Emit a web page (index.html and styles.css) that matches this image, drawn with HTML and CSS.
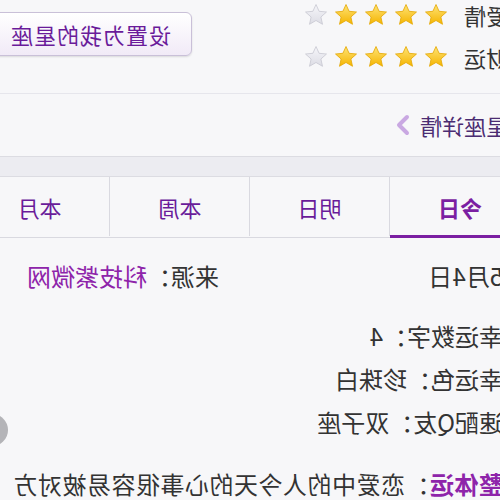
FILE: index.html
```html
<!DOCTYPE html>
<html>
  <head>
    <meta charset="utf-8">
    <title>星座运势</title>
    <link rel="stylesheet" href="styles.css">
  </head>
  <body>
    <svg class="defs" width="0" height="0">
      <defs>
        <linearGradient id="gold" x1="0" y1="0" x2="0" y2="1">
          <stop offset="0" stop-color="#ffe477"/>
          <stop offset="1" stop-color="#f4b400"/>
        </linearGradient>
        <linearGradient id="grey" x1="0" y1="0" x2="0" y2="1">
          <stop offset="0" stop-color="#f6f6fa"/>
          <stop offset="1" stop-color="#dcdce4"/>
        </linearGradient>
        <symbol id="star" viewBox="0 0 24 24">
          <polygon points="12,1.5 15.1,8.3 22.5,9 16.9,14 18.5,21.3 12,17.5 5.5,21.3 7.1,14 1.5,9 8.9,8.3"/>
        </symbol>
      </defs>
    </svg>
    <div class="page">
      <div class="top">
        <div class="rates">
          <div class="rate">
            <span class="rate-label">爱情</span>
            <span class="stars">
              <svg class="star on"><use href="#star"/></svg>
              <svg class="star on"><use href="#star"/></svg>
              <svg class="star on"><use href="#star"/></svg>
              <svg class="star on"><use href="#star"/></svg>
              <svg class="star off"><use href="#star"/></svg>
            </span>
          </div>
          <div class="rate">
            <span class="rate-label">财运</span>
            <span class="stars">
              <svg class="star on"><use href="#star"/></svg>
              <svg class="star on"><use href="#star"/></svg>
              <svg class="star on"><use href="#star"/></svg>
              <svg class="star on"><use href="#star"/></svg>
              <svg class="star off"><use href="#star"/></svg>
            </span>
          </div>
        </div>
        <button class="set-btn">设置为我的星座</button>
      </div>
      <div class="detail-link">
        星座详情
        <svg class="chev" width="16" height="22" viewBox="0 0 16 22"><path d="M4 3 L12 11 L4 19" fill="none" stroke="#c9a8e2" stroke-width="4" stroke-linecap="round" stroke-linejoin="round"/></svg>
      </div>
      <div class="band"></div>
      <div class="tabs">
        <div class="tab active">今日</div>
        <div class="tab">明日</div>
        <div class="tab">本周</div>
        <div class="tab">本月</div>
      </div>
      <div class="content">
        <div class="meta">
          <span>5月4日</span>
          <span class="source">来源：<a class="link">科技紫微网</a></span>
        </div>
        <div class="info">
          <p>幸运数字：4</p>
          <p>幸运色：珍珠白</p>
          <p>速配Q友：双子座</p>
        </div>
        <p class="overall"><b>整体运</b>：恋爱中的人今天的心事很容易被对方</p>
      </div>
    </div>
    <div class="to-top"></div>
  </body>
</html>
```
FILE: styles.css
```css
body{
    margin:0;
    width:500px;
    height:500px;
    overflow:hidden;
    position:relative;
    background:#f7f7f9;
    color:#333;
    font-family:"Noto Sans CJK SC", "Noto Sans", sans-serif;
    transform:scaleX(-1);
}

.defs{
    position:absolute;
}

.page{
    width:560px;
    margin-left:-30px;
}

.top{
    display:flex;
    justify-content:space-between;
    align-items:flex-start;
    height:93px;
    padding-left:22px;
    border-bottom:1px solid #e6e6ec;
}

.rates{
    display:flex;
    flex-direction:column;
    gap:12px;
}

.rate{
    display:flex;
    align-items:center;
    height:30px;
    font-size:22px;
}

.rate-label{
    width:60px;
}

.stars{
    display:flex;
    gap:6px;
}

.star{
    width:24px;
    height:24px;
}
.star.on{
    fill:url(#gold);
    stroke:#e3a600;
    stroke-width:0.8;
}
.star.off{
    fill:url(#grey);
    stroke:#c6c6d0;
    stroke-width:0.8;
}

.set-btn{
    margin:12px 10px 0 0;
    height:44px;
    width:212px;
    padding:0 0 0 20px;
    text-align:left;
    font-family:inherit;
    font-size:22px;
    letter-spacing:1px;
    color:#6a1b9a;
    background:linear-gradient(#ffffff, #f1eaf7);
    border:1px solid #c9c0d8;
    border-radius:6px;
    box-shadow:0 1px 2px rgba(0,0,0,.12);
}

.detail-link{
    display:flex;
    align-items:center;
    gap:9px;
    height:62px;
    padding-left:22px;
    font-size:22px;
    color:#4b2c72;
}

.band{
    height:19px;
    background:#ececf1;
    border-top:1px solid #dcdce2;
    border-bottom:1px solid #dcdce2;
}

.tabs{
    display:flex;
    border-bottom:1px solid #d9d9e0;
}

.tab{
    width:140px;
    height:59px;
    display:flex;
    align-items:center;
    justify-content:center;
    font-size:22px;
    color:#6a1b9a;
    border-left:1px solid #d9d9e0;
    box-sizing:border-box;
}
.tab:first-child{
    border-left:none;
}
.tab.active{
    font-weight:bold;
    color:#7b1fa2;
    border-bottom:3px solid #7b1fa2;
    margin-bottom:-1px;
    height:61px;
    padding-top:2px;
}

.content{
    padding:16px 27px 0 27px;
    font-size:24px;
}

.meta{
    display:flex;
    justify-content:space-between;
    line-height:43px;
}

.source{
    margin-right:30px;
}

.link{
    color:#8e24aa;
}

.info{
    margin-top:17px;
}

.info p{
    margin:0;
    line-height:43px;
}

.overall{
    margin:19px 0 0 0;
    line-height:43px;
    white-space:nowrap;
    letter-spacing:0.5px;
}
.overall b{
    color:#8e24aa;
}

.to-top{
    position:absolute;
    right:-24px;
    top:414px;
    width:32px;
    height:32px;
    border-radius:50%;
    background:#b4b4b8;
}
```
